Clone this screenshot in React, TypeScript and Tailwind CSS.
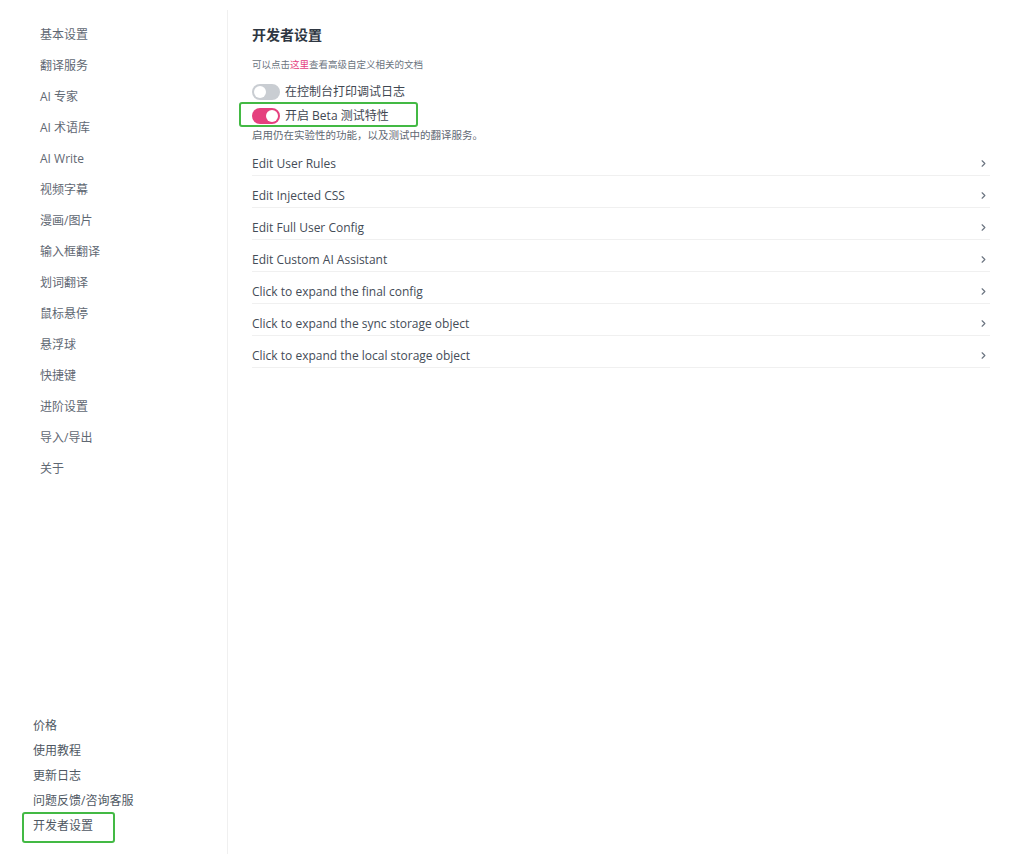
import { ChevronRight } from 'lucide-react';

const font = { fontFamily: '"Open Sans", "Noto Sans CJK SC", sans-serif' };

const navItems = [
  '基本设置',
  '翻译服务',
  'AI 专家',
  'AI 术语库',
  'AI Write',
  '视频字幕',
  '漫画/图片',
  '输入框翻译',
  '划词翻译',
  '鼠标悬停',
  '悬浮球',
  '快捷键',
  '进阶设置',
  '导入/导出',
  '关于',
];

const footerItems = ['价格', '使用教程', '更新日志', '问题反馈/咨询客服'];

const rows = [
  'Edit User Rules',
  'Edit Injected CSS',
  'Edit Full User Config',
  'Edit Custom AI Assistant',
  'Click to expand the final config',
  'Click to expand the sync storage object',
  'Click to expand the local storage object',
];

function Toggle({ on }: { on: boolean }) {
  return (
    <span
      className={
        on
          ? 'relative inline-flex h-[16px] w-[28px] shrink-0 items-center rounded-full bg-[#e5407e]'
          : 'relative inline-flex h-[16px] w-[28px] shrink-0 items-center rounded-full bg-[#c9cdd2]'
      }
    >
      <span
        className={
          on
            ? 'absolute left-[14px] h-[12px] w-[12px] rounded-full bg-white'
            : 'absolute left-[2px] h-[12px] w-[12px] rounded-full bg-white'
        }
      />
    </span>
  );
}

export default function App() {
  return (
    <div className="flex h-[854px] w-[1024px] bg-white" style={font}>
      <aside className="mt-[10px] flex w-[228px] shrink-0 flex-col justify-between border-r border-[#f0f0f0]">
        <nav className="pl-[40px] pt-[9px]">
          {navItems.map((item) => (
            <div key={item} className="flex h-[31px] items-center text-[12px] text-[#5f6873]">
              {item}
            </div>
          ))}
        </nav>

        <div className="pb-[11px] pl-[22px]">
          {footerItems.map((item) => (
            <div key={item} className="flex h-[25px] items-center pl-[11px] text-[12px] text-[#4f5863]">
              {item}
            </div>
          ))}
          <div className="-mt-[1.5px] flex h-[31px] w-[93px] items-center rounded-[3px] border-2 border-[#43b944] pb-[3px] pl-[9px] text-[12px] text-[#4f5863]">
            开发者设置
          </div>
        </div>
      </aside>

      <main className="flex-1 pl-[24px] pr-[34px] pt-[25px]">
        <h1 className="text-[14px] font-bold leading-[20px] text-[#2f3742]">开发者设置</h1>
        <p className="mt-[13px] text-[9.5px] leading-[14px] text-[#6b7480]">
          可以点击<span className="text-[#e5407e]">这里</span>查看高级自定义相关的文档
        </p>

        <div className="mt-[10px] flex h-[20px] items-center gap-[5px] text-[12px] text-[#3f4752]">
          <Toggle on={false} />
          <span>在控制台打印调试日志</span>
        </div>

        <div className="-ml-[13px] flex h-[25px] w-[179px] items-center gap-[5px] rounded-[3px] border-2 border-[#43b944] pl-[11px] pt-[3px] text-[12px] text-[#3f4752]">
          <Toggle on={true} />
          <span>开启 Beta 测试特性</span>
        </div>

        <p className="mt-[1px] text-[10.5px] leading-[14px] text-[#5f6873]">启用仍在实验性的功能，以及测试中的翻译服务。</p>

        <div className="mt-[2px]">
          {rows.map((row) => (
            <div
              key={row}
              className="flex h-[32px] items-center justify-between border-b border-[#f0f0f0] pt-[8px] text-[12px] text-[#444c57]"
            >
              <span>{row}</span>
              <ChevronRight size={11} strokeWidth={2.5} className="mr-[1px] text-[#6b7480]" />
            </div>
          ))}
        </div>
      </main>
    </div>
  );
}
